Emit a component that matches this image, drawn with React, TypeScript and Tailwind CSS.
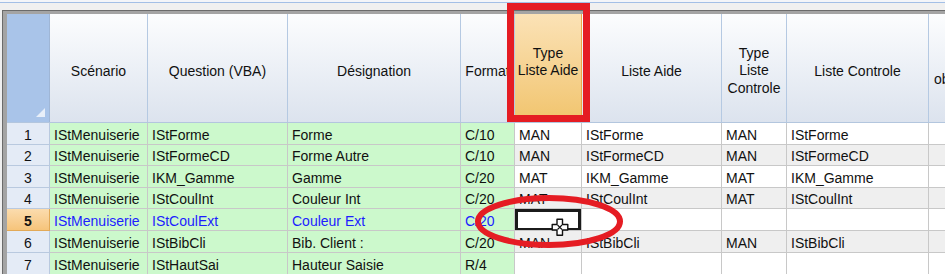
import React from "react";

const widths = [
  "w-[98px]",
  "w-[140px]",
  "w-[173px]",
  "w-[54px]",
  "w-[67px]",
  "w-[140px]",
  "w-[65px]",
  "w-[142px]",
  "w-[120px]",
];

type Row = { n: number; h: string; cells: string[]; blue?: boolean };

const rows: Row[] = [
  { n: 1, h: "h-[22px]", cells: ["IStMenuiserie", "IStForme", "Forme", "C/10", "MAN", "IStForme", "MAN", "IStForme", ""] },
  { n: 2, h: "h-[21px]", cells: ["IStMenuiserie", "IStFormeCD", "Forme Autre", "C/10", "MAN", "IStFormeCD", "MAN", "IStFormeCD", ""] },
  { n: 3, h: "h-[22px]", cells: ["IStMenuiserie", "IKM_Gamme", "Gamme", "C/20", "MAT", "IKM_Gamme", "MAT", "IKM_Gamme", ""] },
  { n: 4, h: "h-[21px]", cells: ["IStMenuiserie", "IStCoulInt", "Couleur Int", "C/20", "MAT", "IStCoulInt", "MAT", "IStCoulInt", ""] },
  { n: 5, h: "h-[22px]", blue: true, cells: ["IStMenuiserie", "IStCoulExt", "Couleur Ext", "C/20", "", "", "", "", ""] },
  { n: 6, h: "h-[22px]", cells: ["IStMenuiserie", "IStBibCli", "Bib. Client :", "C/20", "MAN", "IStBibCli", "MAN", "IStBibCli", ""] },
  { n: 7, h: "h-[22px]", cells: ["IStMenuiserie", "IStHautSai", "Hauteur Saisie", "R/4", "", "", "", "", ""] },
];

function HeaderCell({ w, children, active, left }: { w: string; children: React.ReactNode; active?: boolean; left?: boolean }) {
  return (
    <div
      className={`${w} shrink-0 h-full flex items-center pt-[6px] ${left ? "justify-start pl-[5px]" : "justify-center"} text-center overflow-hidden whitespace-nowrap border-r ${
        active
          ? "bg-gradient-to-b from-[#fbe2b6] to-[#f1c46c] border-[#e9a84a]"
          : "bg-gradient-to-b from-[#fcfdfe] to-[#dce3ee] border-[#b5c9e2]"
      }`}
    >
      {children}
    </div>
  );
}

export default function App() {
  return (
    <div className="w-[945px] h-[274px] overflow-hidden bg-[#f0f0f0] relative font-['Liberation_Sans',Arial,sans-serif] text-[14px] text-[#111]">
      <div className="h-[2px] bg-[#f3f5f9]" />
      <div className="h-[1px] bg-[#a3bfe6]" />
      <div className="h-[7px] bg-[#f0f0f0]" />
      <div className="flex">
        <div className="w-[2px] shrink-0 bg-[#f0f0f0]" />
        <div className="flex-1 border-l border-t border-[#6b6b6b]">
          <div className="border-l-[4px] border-t-[3px] border-[#a4a4a4] bg-white">
            {/* header */}
            <div className="flex h-[109px] border-b border-[#b3c6de]">
              <div className="w-[43px] shrink-0 h-full bg-[#a9c4e9] border-r border-[#9fb6d6] relative">
                <svg className="absolute left-[29px] top-[94px]" width="9" height="9" viewBox="0 0 9 9">
                  <polygon points="9,0 9,9 0,9" fill="#e8eff9" />
                </svg>
              </div>
              <HeaderCell w={widths[0]}>Scénario</HeaderCell>
              <HeaderCell w={widths[1]}>Question (VBA)</HeaderCell>
              <HeaderCell w={widths[2]}>Désignation</HeaderCell>
              <HeaderCell w={widths[3]}>Format</HeaderCell>
              <HeaderCell w={widths[4]} active>
                <div className="leading-[17.5px]">
                  Type
                  <br />
                  Liste Aide
                  <br />
                  &nbsp;
                </div>
              </HeaderCell>
              <HeaderCell w={widths[5]}>Liste Aide</HeaderCell>
              <HeaderCell w={widths[6]}>
                <div className="leading-[17.5px]">
                  Type
                  <br />
                  Liste
                  <br />
                  Controle
                </div>
              </HeaderCell>
              <HeaderCell w={widths[7]}>Liste Controle</HeaderCell>
              <HeaderCell w={widths[8]} left>
                <div className="leading-[17.5px] text-left">
                  &nbsp;
                  <br />
                  obligatoire
                </div>
              </HeaderCell>
            </div>
            {/* rows */}
            {rows.map((r) => {
              const even = r.n % 2 === 0;
              return (
                <div key={r.n} className={`flex ${r.h}`}>
                  <div
                    className={`w-[43px] shrink-0 h-full flex items-center justify-center pt-[3px] border-r border-b ${
                      r.n === 5
                        ? "bg-gradient-to-b from-[#fbdcae] to-[#f6c47a] border-[#e2a957] font-bold"
                        : "bg-[#e4ebf6] border-[#b9c9df]"
                    }`}
                  >
                    {r.n}
                  </div>
                  {r.cells.map((c, i) => {
                    const green = i < 4;
                    const bg = green ? "bg-[#ccf9cc]" : even ? "bg-[#efefef]" : "bg-white";
                    const color = r.blue && green ? "text-[#1d1dff]" : "text-[#111]";
                    const editing = r.n === 5 && i === 4;
                    return (
                      <div
                        key={i}
                        className={`${widths[i]} shrink-0 h-full border-r border-b border-[#c8c8c8] ${bg} ${color} flex items-center overflow-hidden whitespace-nowrap ${editing ? "" : "pl-[4px] pt-[3px]"}`}
                      >
                        {editing ? (
                          <div className="w-[calc(100%+1px)] h-[calc(100%+1px)] border-[3px] border-[#1b1b1b] bg-white" />
                        ) : (
                          c
                        )}
                      </div>
                    );
                  })}
                </div>
              );
            })}
          </div>
        </div>
      </div>

      {/* annotations */}
      <svg className="absolute left-0 top-0 pointer-events-none" width="945" height="274" viewBox="0 0 945 274">
        <rect x="510.5" y="6.5" width="76" height="112" fill="none" stroke="#e51c23" strokeWidth="7" />
        <g transform="translate(551.5 218.5)">
          <path
            d="M5.5 0.7 H11 V6 H16.3 V11.5 H11 V16.8 H5.5 V11.5 H0.7 V6 H5.5 Z"
            fill="#ffffff"
            stroke="#111"
            strokeWidth="1.4"
            strokeLinejoin="round"
          />
          <path d="M6 6.5 L10.5 11 M10.5 6.5 L6 11" stroke="#111" strokeWidth="1.1" />
        </g>
        <ellipse cx="549" cy="221.5" rx="71" ry="23.5" fill="none" stroke="#e51c23" strokeWidth="6" />
      </svg>
    </div>
  );
}
